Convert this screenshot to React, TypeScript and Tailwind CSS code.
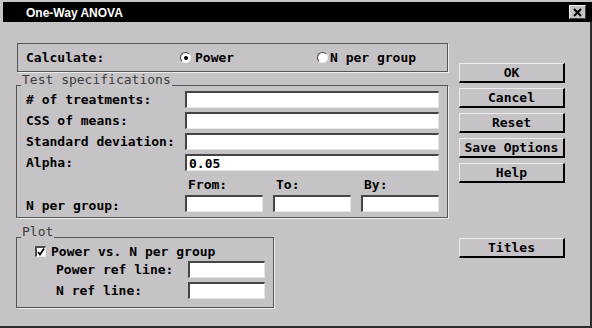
import type { ReactNode } from 'react'

const mono = "font-['DejaVu_Sans_Mono','Liberation_Mono',monospace]"

function Field({ value, className = '' }: { value?: string; className?: string }) {
  return (
    <div
      className={`h-[17px] bg-white border-t-2 border-l-2 border-b border-r border-t-[#454545] border-l-[#454545] border-b-[#e6e6e6] border-r-[#e6e6e6] flex items-center pl-[2px] text-[13px] leading-[13px] font-bold text-black ${className}`}
    >
      {value}
    </div>
  )
}

function Button({ label }: { label: string }) {
  return (
    <div className="h-[20px] w-[106px] bg-[#c6c3c6] border-t border-l border-r-2 border-b-2 border-t-[#ececec] border-l-[#ececec] border-r-black border-b-black flex items-center justify-center text-[13px] font-bold text-black">
      {label}
    </div>
  )
}

function Radio({ checked }: { checked?: boolean }) {
  return (
    <div className="w-[11px] h-[11px] rounded-full bg-white border-[1.5px] border-t-[#4a4a4a] border-l-[#4a4a4a] border-b-[#f4f4f4] border-r-[#f4f4f4] flex items-center justify-center">
      {checked && <div className="w-[4px] h-[4px] rounded-full bg-black" />}
    </div>
  )
}

function Group({ title, className = '', children }: { title: string; className?: string; children: ReactNode }) {
  return (
    <div className={className}>
      <div className="flex items-end">
        <div className="w-[5px] h-[1px] border-t border-l border-[#555]" />
        <span className="px-[1px] text-[13px] leading-[13px] font-normal text-[#3c3c3c]">{title}</span>
        <div className="flex-1 h-[1px] border-t border-r border-[#555]" />
      </div>
      <div className="border-l border-r border-b border-[#555] shadow-[1px_1px_0_#ececec]">{children}</div>
    </div>
  )
}

export default function App() {
  return (
    <div className={`w-[592px] h-[328px] bg-[#c6c3c6] flex flex-col overflow-hidden ${mono}`}>
      {/* Title bar */}
      <div className="h-[20px] mt-[2px] ml-[3px] bg-black flex items-center justify-between pl-[23px] pr-[6px]">
        <span className="font-['Liberation_Sans',Arial,sans-serif] font-bold text-[12px] text-white leading-none pt-[1px]">
          One-Way ANOVA
        </span>
        <div className="w-[17px] h-[14px] bg-[#c6c3c6] border-t border-l border-r border-b border-t-[#f0f0f0] border-l-[#f0f0f0] border-r-[#444] border-b-[#444] flex items-center justify-center">
          <svg width="9" height="9" viewBox="0 0 9 9">
            <path d="M1 1 L8 8 M8 1 L1 8" stroke="black" strokeWidth="2" />
          </svg>
        </div>
      </div>

      {/* Body */}
      <div className="flex-1 flex border-r-2 border-b-2 border-[#2e2e2e] pl-[16px] text-black">
        {/* Left column */}
        <div className="w-[432px] pt-[21px]">
          {/* Calculate */}
          <div className="ml-[1px] h-[29px] border border-[#555] shadow-[1px_1px_0_#ececec] flex items-center pl-[8px] text-[13px] font-bold">
            <span className="w-[154px]">Calculate:</span>
            <div className="w-[137px] flex items-center gap-[4px]">
              <Radio checked />
              <span>Power</span>
            </div>
            <div className="flex items-center gap-[2px]">
              <Radio />
              <span>N per group</span>
            </div>
          </div>

          {/* Test specifications */}
          <Group title="Test specifications" className="mt-[1px]">
            <div className="pt-[5px] pl-[9px] pb-[5px] text-[13px] leading-[13px] font-bold">
              <div className="flex flex-col gap-[4px]">
                {[
                  ['# of treatments:', ''],
                  ['CSS of means:', ''],
                  ['Standard deviation:', ''],
                  ['Alpha:', '0.05'],
                ].map(([label, value]) => (
                  <div key={label} className="flex items-center h-[17px]">
                    <span className="w-[159px]">{label}</span>
                    <Field value={value} className="w-[254px]" />
                  </div>
                ))}
              </div>
              <div className="flex mt-[6px] h-[14px] items-center">
                <span className="w-[159px]" />
                <div className="grid grid-cols-3 gap-[10px] w-[254px]">
                  <span className="pl-[3px]">From:</span>
                  <span className="pl-[3px]">To:</span>
                  <span className="pl-[3px]">By:</span>
                </div>
              </div>
              <div className="flex mt-[4px] h-[17px] items-center">
                <span className="w-[159px] pt-[3px]">N per group:</span>
                <div className="grid grid-cols-3 gap-[10px] w-[254px]">
                  <Field />
                  <Field />
                  <Field />
                </div>
              </div>
            </div>
          </Group>

          {/* Plot */}
          <Group title="Plot" className="w-[258px] pt-[7px]">
            <div className="pt-[7px] pl-[18px] pb-[8px] text-[13px] leading-[13px] font-bold">
              <div className="flex items-center h-[12px] gap-[5px]">
                <div className="w-[11px] h-[11px] bg-white border-t-2 border-l-2 border-b border-r border-t-[#4a4a4a] border-l-[#4a4a4a] border-b-[#ececec] border-r-[#ececec] flex items-center justify-center">
                  <svg width="8" height="8" viewBox="0 0 8 8">
                    <path d="M1 4 L3 6.5 L7 0.5" stroke="black" strokeWidth="1.8" fill="none" />
                  </svg>
                </div>
                <span>Power vs. N per group</span>
              </div>
              <div className="flex flex-col gap-[4px] mt-[4px] pl-[21px]">
                <div className="flex items-center h-[17px]">
                  <span className="w-[132px]">Power ref line:</span>
                  <Field className="w-[77px]" />
                </div>
                <div className="flex items-center h-[17px]">
                  <span className="w-[132px]">N ref line:</span>
                  <Field className="w-[77px]" />
                </div>
              </div>
            </div>
          </Group>
        </div>

        {/* Right column */}
        <div className="ml-[11px] pt-[41px] flex flex-col">
          <div className="flex flex-col gap-[5px]">
            <Button label="OK" />
            <Button label="Cancel" />
            <Button label="Reset" />
            <Button label="Save Options" />
            <Button label="Help" />
          </div>
          <div className="mt-[55px]">
            <Button label="Titles" />
          </div>
        </div>
      </div>
    </div>
  )
}
